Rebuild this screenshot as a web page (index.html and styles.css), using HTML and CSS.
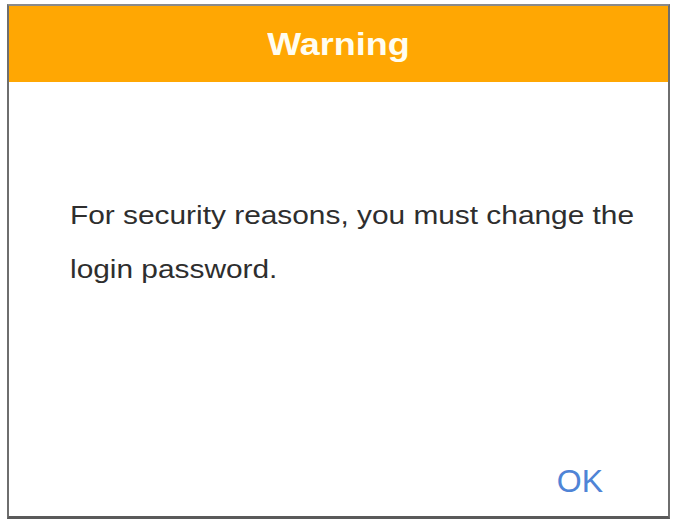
FILE: index.html
```html
<!DOCTYPE html>
<html>
<head>
<meta charset="utf-8">
<link rel="stylesheet" href="styles.css">
</head>
<body>
<div class="dialog">
  <div class="header"><span class="title">Warning</span></div>
  <div class="content">
    <p class="message">For security reasons, you must change the<br>login password.</p>
    <div class="footer"><span class="ok">OK</span></div>
  </div>
</div>
</body>
</html>
```
FILE: styles.css
```css
html, body {
  margin: 0;
  padding: 0;
  background: #ffffff;
}
body {
  font-family: "Liberation Sans", Arial, sans-serif;
}
.dialog {
  box-sizing: border-box;
  margin: 4px 0 0 7px;
  width: 663px;
  height: 515px;
  border-top: 2px solid #8a8a8a;
  border-left: 2px solid #6e6e6e;
  border-right: 2px solid #6e6e6e;
  border-bottom: 3px solid #5a5a5a;
  display: flex;
  flex-direction: column;
  background: #ffffff;
}
.header {
  height: 76px;
  box-sizing: border-box;
  padding-top: 23px;
  background: #ffa703;
  text-align: center;
}
.title {
  display: inline-block;
  font-size: 31px;
  line-height: 31px;
  font-weight: bold;
  color: #fffdf0;
  transform: scaleX(1.16);
}
.content {
  flex: 1;
  display: flex;
  flex-direction: column;
  align-items: flex-start;
  padding: 106px 0 19px 61px;
}
.message {
  margin: 0;
  font-size: 26px;
  line-height: 54px;
  color: #2e2e2e;
  transform: scaleX(1.148);
  transform-origin: left center;
  white-space: nowrap;
}
.footer {
  margin-top: auto;
  align-self: stretch;
  text-align: right;
  padding-right: 65px;
}
.ok {
  font-size: 32px;
  line-height: 32px;
  color: #4f84d6;
}
```
